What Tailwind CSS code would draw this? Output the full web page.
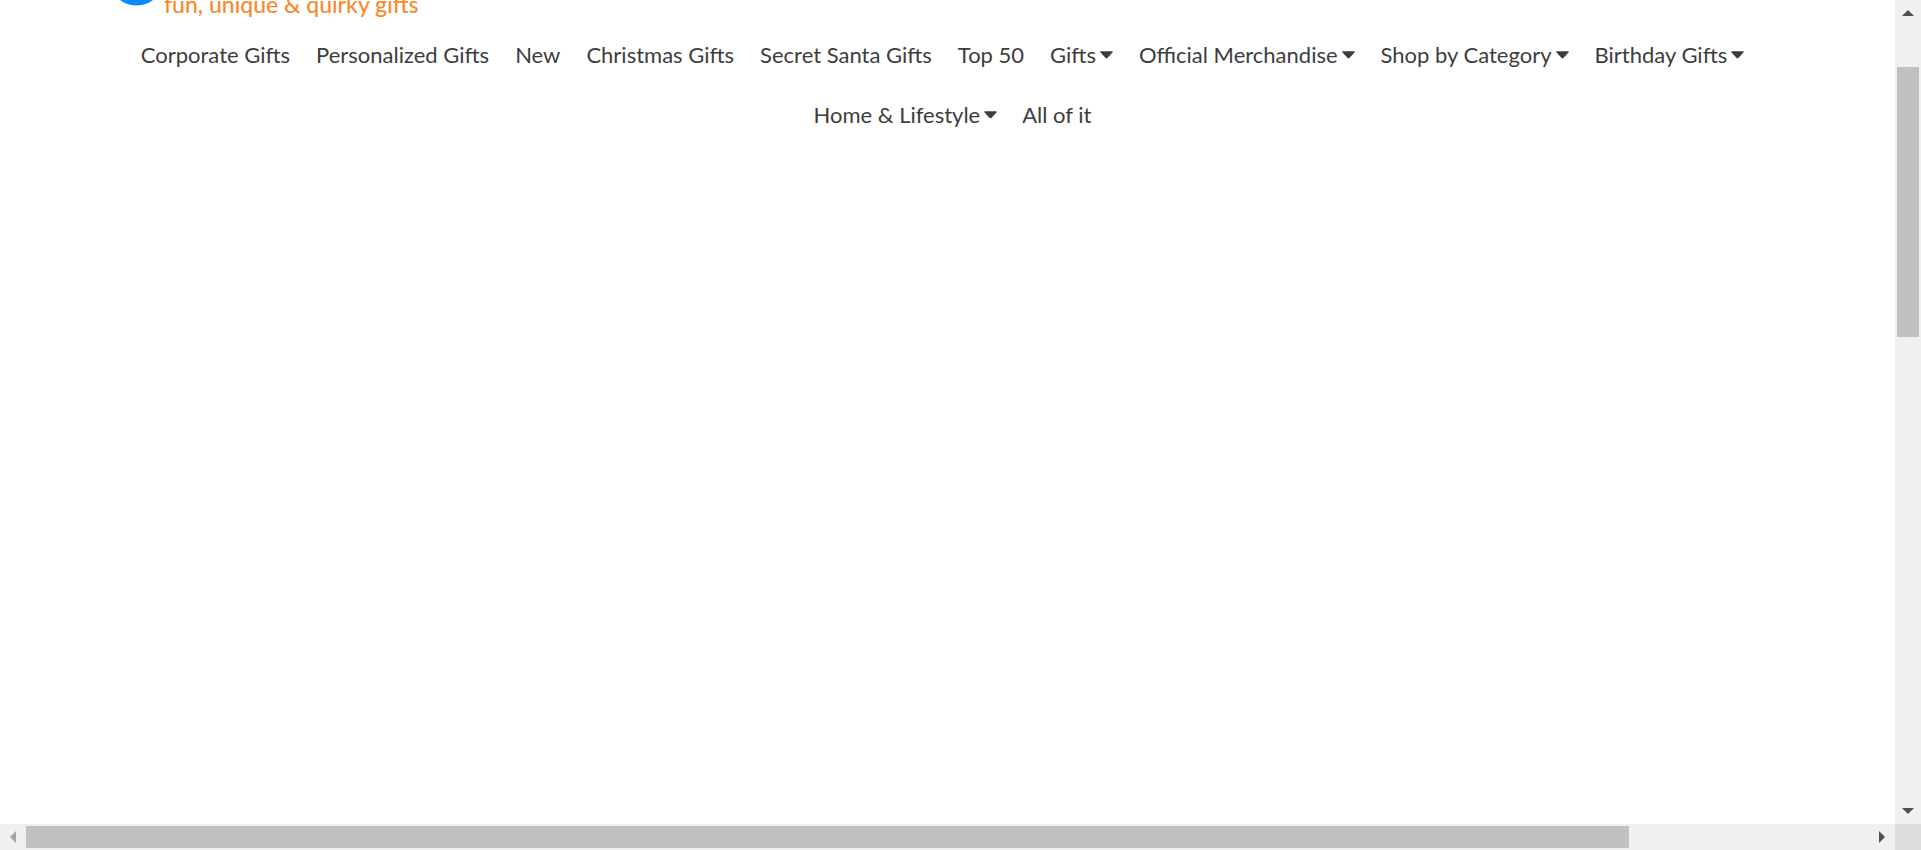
<!DOCTYPE html>
<html lang="en">
<head>
<meta charset="utf-8">
<title>Fun, unique &amp; quirky gifts</title>
<script src="https://cdn.jsdelivr.net/npm/@tailwindcss/browser@4"></script>
</head>
<body class="bg-white font-['Lato',sans-serif] text-[#3d3d3d]">
<div class="grid h-screen grid-cols-[1fr_26px] grid-rows-[1fr_26px] overflow-hidden">
  <main class="min-w-0 overflow-hidden bg-white">
    <header class="h-[25px] pl-[118px]">
      <a href="#" class="flex h-6 items-start gap-2 overflow-hidden text-[#f68b2c]">
        <svg class="h-6 w-[38px]" viewBox="0 0 38 24" aria-hidden="true"><circle cx="18.5" cy="-22" r="27.5" fill="#0a8aff"/></svg>
        <span class="-mt-3 text-[23px] leading-8 font-medium whitespace-nowrap">fun, unique &amp; quirky gifts</span>
      </a>
    </header>
    <nav aria-label="Main" class="text-[22px] leading-[60px] whitespace-nowrap">
      <ul class="flex justify-center gap-[26px] pr-[10px]">
        <li><a href="#">Corporate Gifts</a></li>
        <li><a href="#">Personalized Gifts</a></li>
        <li><a href="#">New</a></li>
        <li><a href="#">Christmas Gifts</a></li>
        <li><a href="#">Secret Santa Gifts</a></li>
        <li><a href="#">Top 50</a></li>
        <li><a href="#" class="flex items-center gap-1">Gifts<svg class="h-2 w-[13px]" viewBox="0 0 14 8" aria-hidden="true"><path d="M1 0h12q1.200 .3.400 1.300L8 7.200q-1 .8-2 0L.6 1.300Q-.2.300 1 0z" fill="#3d3d3d"/></svg></a></li>
        <li><a href="#" class="flex items-center gap-1">Official Merchandise<svg class="h-2 w-[13px]" viewBox="0 0 14 8" aria-hidden="true"><path d="M1 0h12q1.200 .3.400 1.300L8 7.200q-1 .8-2 0L.6 1.300Q-.2.300 1 0z" fill="#3d3d3d"/></svg></a></li>
        <li><a href="#" class="flex items-center gap-1">Shop by Category<svg class="h-2 w-[13px]" viewBox="0 0 14 8" aria-hidden="true"><path d="M1 0h12q1.200 .3.400 1.300L8 7.200q-1 .8-2 0L.6 1.300Q-.2.300 1 0z" fill="#3d3d3d"/></svg></a></li>
        <li><a href="#" class="flex items-center gap-1">Birthday Gifts<svg class="h-2 w-[13px]" viewBox="0 0 14 8" aria-hidden="true"><path d="M1 0h12q1.200 .3.400 1.300L8 7.200q-1 .8-2 0L.6 1.300Q-.2.300 1 0z" fill="#3d3d3d"/></svg></a></li>
      </ul>
      <ul class="flex justify-center gap-[25px] pl-[10px]">
        <li><a href="#" class="flex items-center gap-1">Home &amp; Lifestyle<svg class="h-2 w-[13px]" viewBox="0 0 14 8" aria-hidden="true"><path d="M1 0h12q1.200 .3.400 1.300L8 7.200q-1 .8-2 0L.6 1.300Q-.2.300 1 0z" fill="#3d3d3d"/></svg></a></li>
        <li><a href="#">All of it</a></li>
      </ul>
    </nav>
  </main>
  <div class="flex flex-col items-center bg-[#f0f0f0]">
    <button type="button" aria-label="Scroll up" class="flex h-[26px] w-full items-center justify-center"><svg class="h-[6px] w-3" viewBox="0 0 12 6"><path d="M0 6L6 0l6 6z" fill="#505050"/></svg></button>
    <div class="flex w-full flex-1 flex-col items-center pt-[41px]"><div class="h-[37%] w-[22px] bg-[#c1c1c1]"></div></div>
    <button type="button" aria-label="Scroll down" class="flex h-[26px] w-full items-center justify-center"><svg class="h-[6px] w-3" viewBox="0 0 12 6"><path d="M0 0h12L6 6z" fill="#505050"/></svg></button>
  </div>
  <div class="flex items-center bg-[#f0f0f0]">
    <button type="button" aria-label="Scroll left" class="flex h-full w-[26px] items-center justify-center"><svg class="h-3 w-[6px]" viewBox="0 0 6 12"><path d="M6 0v12L0 6z" fill="#a3a3a3"/></svg></button>
    <div class="flex-1"><div class="h-[22px] w-[87%] bg-[#c1c1c1]"></div></div>
    <button type="button" aria-label="Scroll right" class="flex h-full w-[26px] items-center justify-center"><svg class="h-3 w-[6px]" viewBox="0 0 6 12"><path d="M0 0v12l6-6z" fill="#505050"/></svg></button>
  </div>
  <div class="bg-[#dcdcdc]"></div>
</div>
</body>
</html>
